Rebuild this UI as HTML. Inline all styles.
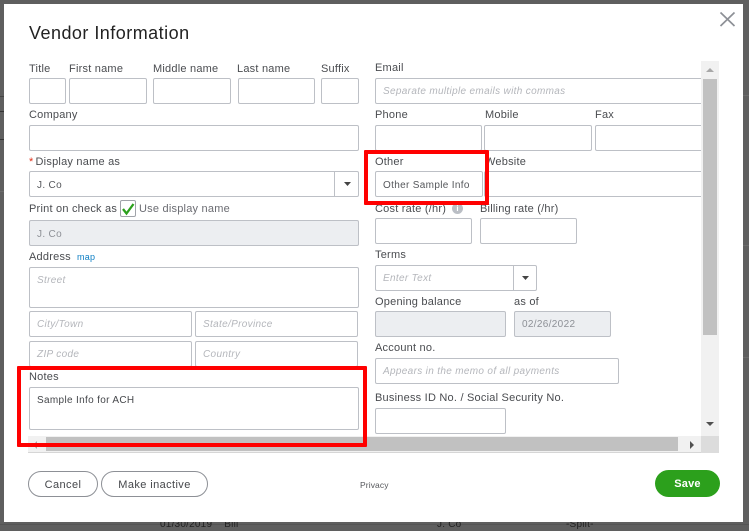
<!DOCTYPE html>
<html><head><meta charset="utf-8"><style>
html,body{margin:0;padding:0}
body{width:749px;height:528px;overflow:hidden;background:#5f5f5f;position:relative;font-family:"Liberation Sans",sans-serif}
#w{position:absolute;left:0;top:0;width:749px;height:528px;filter:blur(.35px)}
#m{position:absolute;left:4px;top:4px;width:739px;height:518px;background:#fff}
.l{position:absolute;font-size:11px;line-height:14px;color:#4a4c50;white-space:nowrap;letter-spacing:.22px;margin-top:1px}
.i{position:absolute;box-sizing:border-box;background:#fff;border:1px solid #bdc0c6;border-radius:2px;font-size:10px;line-height:26px;padding-left:7px;color:#6b6c72;white-space:nowrap;letter-spacing:.33px}
.p{font-style:italic;color:#b4b6bb}
.g{background:#eceef1;color:#8d9096}
.r{position:absolute;box-sizing:border-box;border:4px solid #f00;border-radius:1px}
.b{position:absolute;box-sizing:border-box;border:1px solid #8d9096;border-radius:14px;background:#fff;color:#45474b;font-size:11px;text-align:center;line-height:27px;letter-spacing:.4px}
.s{position:absolute}
</style></head><body><div id="w">
<div class="s" style="left:0;top:96px;width:4px;height:1px;background:#444"></div>
<div class="s" style="left:0;top:111px;width:4px;height:1px;background:#333"></div>
<div class="s" style="left:0;top:139px;width:4px;height:1px;background:#333"></div>
<div class="s" style="left:0;top:191px;width:4px;height:1px;background:#6c6c6c"></div>
<div class="s" style="left:743px;top:95px;width:6px;height:1px;background:#6c6c6c"></div>
<div class="s" style="left:743px;top:245px;width:6px;height:1px;background:#6c6c6c"></div>
<div class="s" style="left:743px;top:357px;width:6px;height:1px;background:#6c6c6c"></div>
<div class="s" style="left:0;top:524px;width:749px;height:1px;background:#555"></div>
<div class="l" style="left:160px;top:518px;color:#222;font-size:10px;line-height:12px">01/30/2019 &nbsp;&nbsp;&nbsp;Bill</div>
<div class="l" style="left:437px;top:518px;color:#222;font-size:10px;line-height:12px">J. Co</div>
<div class="l" style="left:566px;top:518px;color:#222;font-size:10px;line-height:12px">-Split-</div>
<div id="m"></div>

<div class="l" style="left:29px;top:22px;font-size:18px;line-height:20px;color:#222;letter-spacing:.47px">Vendor Information</div>
<svg class="s" style="left:718px;top:10px" width="20" height="18"><path d="M2.500 2.500 L16.500 16 M16.500 2.500 L2.500 16" stroke="#8d9096" stroke-width="1.700" fill="none"/></svg>

<div class="l" style="left:29px;top:61px">Title</div>
<div class="l" style="left:69px;top:61px">First name</div>
<div class="l" style="left:153px;top:61px">Middle name</div>
<div class="l" style="left:237px;top:61px">Last name</div>
<div class="l" style="left:321px;top:61px">Suffix</div>
<div class="i" style="left:29px;top:78px;width:37px;height:26px"></div>
<div class="i" style="left:69px;top:78px;width:78px;height:26px"></div>
<div class="i" style="left:153px;top:78px;width:78px;height:26px"></div>
<div class="i" style="left:238px;top:78px;width:77px;height:26px"></div>
<div class="i" style="left:321px;top:78px;width:38px;height:26px"></div>

<div class="l" style="left:29px;top:107px">Company</div>
<div class="i" style="left:29px;top:125px;width:330px;height:26px"></div>

<div class="l" style="left:29px;top:154px"><span style="color:#e0321c">*</span><span style="margin-left:2px">Display name as</span></div>
<div class="i" style="left:29px;top:171px;width:330px;height:26px;color:#55575b;line-height:27px">J. Co</div>
<div class="s" style="left:334px;top:171px;width:1px;height:26px;background:#bdc0c6"></div>
<svg class="s" style="left:343px;top:182px" width="9" height="5"><path d="M1 0H8L4.500 4Z" fill="#444"/></svg>

<div class="l" style="left:29px;top:201px">Print on check as</div>
<div class="s" style="box-sizing:border-box;left:120px;top:200px;width:16px;height:17px;border:1px solid #a0a3a9;border-radius:2px;background:#fff"></div>
<svg class="s" style="left:120px;top:200px" width="16" height="17"><path d="M3 9 L6.500 13.500 L13.500 4" stroke="#2ca01c" stroke-width="2.300" fill="none"/></svg>
<div class="l" style="left:139px;top:201px;color:#6b6c72">Use display name</div>
<div class="i g" style="left:29px;top:220px;width:330px;height:26px;line-height:27px">J. Co</div>

<div class="l" style="left:29px;top:249px">Address</div>
<div class="l" style="left:77px;top:249px;font-size:9px;color:#0d7ec4">map</div>
<div class="i p" style="left:29px;top:267px;width:330px;height:41px;line-height:26px">Street</div>
<div class="i p" style="left:29px;top:311px;width:163px;height:26px">City/Town</div>
<div class="i p" style="left:195px;top:311px;width:163px;height:26px">State/Province</div>
<div class="i p" style="left:29px;top:341px;width:163px;height:26px">ZIP code</div>
<div class="i p" style="left:195px;top:341px;width:163px;height:26px">Country</div>
<div class="l" style="left:29px;top:369px">Notes</div>
<div class="i" style="left:29px;top:387px;width:330px;height:43px;color:#45474b">Sample Info for ACH</div>

<div class="l" style="left:375px;top:60px">Email</div>
<div class="i p" style="left:375px;top:78px;width:340px;height:26px">Separate multiple emails with commas</div>
<div class="l" style="left:375px;top:107px">Phone</div>
<div class="l" style="left:485px;top:107px">Mobile</div>
<div class="l" style="left:595px;top:107px">Fax</div>
<div class="i" style="left:375px;top:125px;width:107px;height:26px"></div>
<div class="i" style="left:484px;top:125px;width:108px;height:26px"></div>
<div class="i" style="left:595px;top:125px;width:120px;height:26px"></div>
<div class="l" style="left:375px;top:154px">Other</div>
<div class="l" style="left:485px;top:154px">Website</div>
<div class="i" style="left:375px;top:171px;width:108px;height:26px;color:#55575b;line-height:27px">Other Sample Info</div>
<div class="i" style="left:484px;top:171px;width:231px;height:26px"></div>
<div class="l" style="left:375px;top:201px">Cost rate (/hr)</div>
<div class="s" style="left:452px;top:203px;width:11px;height:11px;border-radius:50%;background:#babec5;color:#fff;font:bold 8px/11px 'Liberation Sans',sans-serif;text-align:center">i</div>
<div class="l" style="left:480px;top:201px">Billing rate (/hr)</div>
<div class="i" style="left:375px;top:218px;width:97px;height:26px"></div>
<div class="i" style="left:480px;top:218px;width:97px;height:26px"></div>
<div class="l" style="left:375px;top:247px">Terms</div>
<div class="i p" style="left:375px;top:265px;width:162px;height:26px">Enter Text</div>
<div class="s" style="left:513px;top:265px;width:1px;height:26px;background:#bdc0c6"></div>
<svg class="s" style="left:521px;top:276px" width="9" height="5"><path d="M1 0H8L4.500 4Z" fill="#444"/></svg>
<div class="l" style="left:375px;top:294px">Opening balance</div>
<div class="l" style="left:514px;top:294px">as of</div>
<div class="i g" style="left:375px;top:311px;width:131px;height:26px"></div>
<div class="i g" style="left:514px;top:311px;width:97px;height:26px">02/26/2022</div>
<div class="l" style="left:375px;top:340px">Account no.</div>
<div class="i p" style="left:375px;top:358px;width:244px;height:26px">Appears in the memo of all payments</div>
<div class="l" style="left:375px;top:390px">Business ID No. / Social Security No.</div>
<div class="i" style="left:375px;top:408px;width:131px;height:26px"></div>

<div class="s" style="left:701px;top:61px;width:18px;height:376px;background:#f1f1f1"></div>
<div class="s" style="left:703px;top:79px;width:14px;height:256px;background:#c1c1c1"></div>
<svg class="s" style="left:705px;top:67px" width="10" height="6"><path d="M1 5H9L5 1Z" fill="#a8a8a8"/></svg>
<svg class="s" style="left:705px;top:421px" width="10" height="6"><path d="M1 1H9L5 5Z" fill="#505050"/></svg>
<div class="s" style="left:28px;top:436px;width:691px;height:17px;background:#f1f1f1;border-bottom:1px solid #d6d6d6;box-sizing:border-box"></div>
<div class="s" style="left:701px;top:436px;width:18px;height:17px;background:#dcdcdc"></div>
<div class="s" style="left:46px;top:437px;width:632px;height:14px;background:#c1c1c1"></div>
<svg class="s" style="left:32px;top:440px" width="6" height="10"><path d="M5 1V9L1 5Z" fill="#a8a8a8"/></svg>
<svg class="s" style="left:689px;top:440px" width="6" height="10"><path d="M1 1V9L5 5Z" fill="#505050"/></svg>

<div class="r" style="left:17px;top:366px;width:350px;height:81px"></div>
<div class="r" style="left:364px;top:150px;width:125px;height:55px"></div>

<div class="b" style="left:28px;top:471px;width:70px;height:26px">Cancel</div>
<div class="b" style="left:101px;top:471px;width:107px;height:26px">Make inactive</div>
<div class="l" style="left:360px;top:477px;font-size:8.500px;color:#55575b;letter-spacing:.1px">Privacy</div>
<div class="b" style="left:655px;top:470px;width:65px;height:27px;background:#2ca01c;border:0;color:#fff;font-weight:bold;line-height:29px;font-size:11px;letter-spacing:.2px">Save</div>
</div></body></html>
